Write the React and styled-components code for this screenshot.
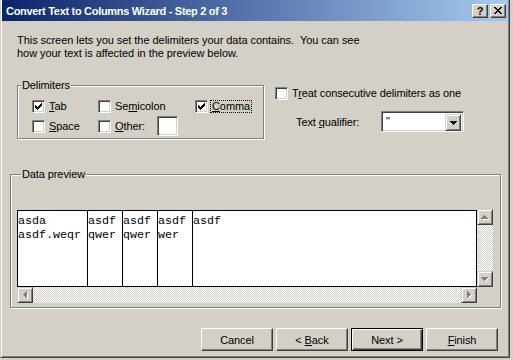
import React from 'react';
import styled, { createGlobalStyle } from 'styled-components';

const face = '#d4d0c8';
const shadow = '#808080';
const dark = '#404040';
const ui = '"Liberation Sans", Arial, sans-serif';
const mono = '"Liberation Mono", "Courier New", monospace';

const GlobalStyle = createGlobalStyle`
  html, body {
    margin: 0;
    padding: 0;
    background: ${face};
  }
  body {
    font-family: ${ui};
    font-size: 11px;
    letter-spacing: -0.1px;
    color: #000;
  }
  * {
    box-sizing: border-box;
  }
`;

const Window = styled.div`
  width: 510px;
  height: 358px;
  display: flex;
  flex-direction: column;
  background: ${face};
  border-left: 1px solid ${face};
  border-right: 1px solid ${dark};
  border-bottom: 1px solid ${dark};
  padding: 0 1px 1px 1px;
  box-shadow: inset 1px 0 #fff, inset -1px -1px ${shadow};
`;

const TitleBar = styled.div`
  height: 21px;
  flex-shrink: 0;
  display: flex;
  align-items: center;
  justify-content: space-between;
  padding: 0 2px 0 2px;
  background: linear-gradient(to right, #0a246a, #a6caf0);
`;

const TitleText = styled.span`
  color: #fff;
  font-weight: bold;
  font-size: 11px;
  padding-left: 2px;
  letter-spacing: -0.3px;
`;

const CaptionButtons = styled.div`
  display: flex;
  gap: 2px;
`;

const CaptionButton = styled.div`
  width: 16px;
  height: 14px;
  display: flex;
  align-items: center;
  justify-content: center;
  background: ${face};
  border: 1px solid;
  border-color: #fff ${dark} ${dark} #fff;
  box-shadow: inset -1px -1px ${shadow};
  font-weight: bold;
  font-size: 11px;
  line-height: 12px;
`;

const Body = styled.div`
  flex: 1;
  display: flex;
  flex-direction: column;
  padding: 0 0 0 8px;
`;

const Intro = styled.p`
  margin: 13px 0 0 7px;
  line-height: 13px;
  letter-spacing: -0.05px;
  white-space: pre;
`;

const OptionsRow = styled.div`
  display: flex;
  gap: 11px;
  margin-top: 19px;
  padding-left: 7px;
`;

const Group = styled.fieldset`
  margin: 0;
  padding: 0;
  min-width: 0;
  width: ${(p) => p.$width}px;
  border: 1px solid ${shadow};
  box-shadow: inset 1px 1px #fff, 1px 1px #fff;
`;

const Legend = styled.legend`
  margin-left: ${(p) => p.$offset}px;
  padding: 0 1px;
  line-height: 13px;
  background: ${face};
`;

const DelimGrid = styled.div`
  display: grid;
  grid-template-columns: 66px 97px auto;
  grid-auto-rows: 20px;
  align-items: center;
  padding: 4px 0 2px 14px;
`;

const CheckRow = styled.div`
  display: flex;
  align-items: center;
  gap: ${(p) => (p.$focus ? 2 : 4)}px;
  line-height: 13px;
`;

const Box = styled.span`
  width: 13px;
  height: 13px;
  flex-shrink: 0;
  display: flex;
  align-items: center;
  justify-content: center;
  background: #fff;
  border: 1px solid;
  border-color: ${shadow} #fff #fff ${shadow};
  box-shadow: inset 1px 1px ${dark}, inset -1px -1px ${face};
`;

const Label = styled.span`
  padding: 0 ${(p) => (p.$focus ? 1 : 0)}px;
  border: ${(p) => (p.$focus ? '1px dotted #000' : 'none')};
  line-height: ${(p) => (p.$focus ? 11 : 13)}px;
`;

const SmallField = styled.span`
  width: 21px;
  height: 20px;
  margin-left: 8px;
  background: #fff;
  border: 1px solid;
  border-color: ${shadow} #fff #fff ${shadow};
  box-shadow: inset 1px 1px ${dark}, inset -1px -1px ${face};
`;

const SideColumn = styled.div`
  display: flex;
  flex-direction: column;
  padding-top: 8px;
`;

const QualifierRow = styled.div`
  display: flex;
  align-items: center;
  margin-top: 11px;
  padding-left: 21px;
`;

const QualifierLabel = styled.span`
  width: 85px;
`;

const Combo = styled.div`
  width: 83px;
  height: 21px;
  display: flex;
  background: #fff;
  border: 1px solid;
  border-color: ${shadow} #fff #fff ${shadow};
  box-shadow: inset 1px 1px ${dark}, inset -1px -1px ${face};
  padding: 2px;
`;

const ComboValue = styled.span`
  flex: 1;
  padding-left: 2px;
  line-height: 15px;
`;

const DropButton = styled.span`
  width: 16px;
  height: 17px;
  display: flex;
  align-items: center;
  justify-content: center;
  background: ${face};
  border: 1px solid;
  border-color: ${face} ${dark} ${dark} ${face};
  box-shadow: inset 1px 1px #fff, inset -1px -1px ${shadow};
`;

const PreviewGroup = styled(Group)`
  margin-top: 29px;
  padding: 28px 7px 4px 6px;
`;

const PreviewFrame = styled.div`
  display: grid;
  grid-template-columns: 460px 16px;
  grid-template-rows: 78px 16px;
`;

const DataGrid = styled.div`
  display: flex;
  background: #fff;
  border: 1px solid #000;
  margin-top: 1px;
  overflow: hidden;
`;

const DataColumn = styled.div`
  flex: ${(p) => (p.$width ? `0 0 ${p.$width}px` : '1')};
  border-right: ${(p) => (p.$width ? '1px solid #000' : 'none')};
  font-family: ${mono};
  font-size: 11.67px;
  letter-spacing: 0;
  line-height: 14px;
  padding-top: 3px;
  white-space: pre;
`;

const Track = styled.div`
  display: flex;
  flex-direction: ${(p) => (p.$vertical ? 'column' : 'row')};
  justify-content: space-between;
  background: repeating-conic-gradient(#fff 0 25%, ${face} 0 50%) 0 0 / 2px 2px;
`;

const ScrollButton = styled.span`
  width: 16px;
  height: 16px;
  display: flex;
  align-items: center;
  justify-content: center;
  background: ${face};
  border: 1px solid;
  border-color: ${face} ${dark} ${dark} ${face};
  box-shadow: inset 1px 1px #fff, inset -1px -1px ${shadow};
`;

const Corner = styled.div`
  background: ${face};
`;

const ButtonRow = styled.div`
  display: flex;
  justify-content: flex-end;
  gap: 3px;
  margin-top: 20px;
  padding-right: 10px;
`;

const Button = styled.button`
  width: 72px;
  height: 23px;
  padding: 0;
  font-family: ${ui};
  font-size: 11px;
  color: #000;
  letter-spacing: -0.1px;
  background: ${face};
  border: 1px solid;
  border-color: ${(p) => (p.$default ? '#000' : `#fff ${dark} ${dark} #fff`)};
  box-shadow: ${(p) =>
    p.$default
      ? `inset 1px 1px #fff, inset -1px -1px ${dark}, inset -2px -2px ${shadow}`
      : `inset -1px -1px ${shadow}`};
`;

const Px = ({ w, h, d, fill = '#000' }) => (
  <svg width={w} height={h} viewBox={`0 0 ${w} ${h}`} shapeRendering='crispEdges'>
    <path d={d} fill={fill} />
  </svg>
);

const checkPath =
  'M6 0h1v1h-1zM5 1h2v1h-2zM0 2h1v1h-1zM4 2h3v1h-3zM0 3h2v1h-2zM3 3h3v1h-3zM0 4h5v1h-5zM1 5h3v1h-3zM2 6h1v1h-1z';
const closePath =
  'M0 0h2v1h-2zM6 0h2v1h-2zM1 1h2v1h-2zM5 1h2v1h-2zM2 2h4v1h-4zM3 3h2v1h-2zM2 4h4v1h-4zM1 5h2v1h-2zM5 5h2v1h-2zM0 6h2v1h-2zM6 6h2v1h-2z';
const downPath = 'M0 0h7v1h-7zM1 1h5v1h-5zM2 2h3v1h-3zM3 3h1v1h-1z';

const Arrow = ({ dir }) => {
  const shapes = {
    up: 'M3 0h1v1h-1zM2 1h3v1h-3zM1 2h5v1h-5zM0 3h7v1h-7z',
    down: downPath,
    left: 'M3 0h1v7h-1zM2 1h1v5h-1zM1 2h1v3h-1zM0 3h1v1h-1z',
    right: 'M0 0h1v7h-1zM1 1h1v5h-1zM2 2h1v3h-1zM3 3h1v1h-1z',
  };
  const horiz = dir === 'left' || dir === 'right';
  const w = horiz ? 5 : 8;
  const h = horiz ? 8 : 5;
  return (
    <svg width={w} height={h} viewBox={`0 0 ${w} ${h}`} shapeRendering='crispEdges'>
      <path d={shapes[dir]} fill='#fff' transform='translate(1 1)' />
      <path d={shapes[dir]} fill={shadow} />
    </svg>
  );
};

const Check = ({ checked, children, focus }) => (
  <CheckRow $focus={focus}>
    <Box>{checked && <Px w={7} h={7} d={checkPath} />}</Box>
    <Label $focus={focus}>{children}</Label>
  </CheckRow>
);

const columns = [
  { id: 1, width: 70, lines: ['asda', 'asdf.weqr'] },
  { id: 2, width: 35, lines: ['asdf', 'qwer'] },
  { id: 3, width: 35, lines: ['asdf', 'qwer'] },
  { id: 4, width: 35, lines: ['asdf', 'wer'] },
  { id: 5, lines: ['asdf'] },
];

const buttons = [
  { id: 'cancel', text: 'Cancel' },
  { id: 'back', text: <>&lt; <u>B</u>ack</> },
  { id: 'next', text: 'Next >', isDefault: true },
  { id: 'finish', text: <><u>F</u>inish</> },
];

export default function App() {
  return (
    <>
      <GlobalStyle />
      <Window>
        <TitleBar>
          <TitleText>Convert Text to Columns Wizard - Step 2 of 3</TitleText>
          <CaptionButtons>
            <CaptionButton>?</CaptionButton>
            <CaptionButton>
              <Px w={8} h={7} d={closePath} />
            </CaptionButton>
          </CaptionButtons>
        </TitleBar>
        <Body>
          <Intro>
            {'This screen lets you set the delimiters your data contains.  You can see\nhow your text is affected in the preview below.'}
          </Intro>
          <OptionsRow>
            <Group $width={247}>
              <Legend $offset={3}>Delimiters</Legend>
              <DelimGrid>
                <Check checked>
                  <u>T</u>ab
                </Check>
                <Check>
                  Se<u>m</u>icolon
                </Check>
                <Check checked focus>
                  <u>C</u>omma
                </Check>
                <Check>
                  <u>S</u>pace
                </Check>
                <CheckRow>
                  <Check>
                    <u>O</u>ther:
                  </Check>
                  <SmallField />
                </CheckRow>
              </DelimGrid>
            </Group>
            <SideColumn>
              <Check>
                T<u>r</u>eat consecutive delimiters as one
              </Check>
              <QualifierRow>
                <QualifierLabel>
                  Text <u>q</u>ualifier:
                </QualifierLabel>
                <Combo>
                  <ComboValue>"</ComboValue>
                  <DropButton>
                    <Px w={7} h={4} d={downPath} />
                  </DropButton>
                </Combo>
              </QualifierRow>
            </SideColumn>
          </OptionsRow>
          <PreviewGroup $width={491}>
            <Legend $offset={4}>Data preview</Legend>
            <PreviewFrame>
              <DataGrid>
                {columns.map((col) => (
                  <DataColumn key={col.id} $width={col.width}>
                    {col.lines.join('\n')}
                  </DataColumn>
                ))}
              </DataGrid>
              <Track $vertical>
                <ScrollButton>
                  <Arrow dir='up' />
                </ScrollButton>
                <ScrollButton>
                  <Arrow dir='down' />
                </ScrollButton>
              </Track>
              <Track>
                <ScrollButton>
                  <Arrow dir='left' />
                </ScrollButton>
                <ScrollButton>
                  <Arrow dir='right' />
                </ScrollButton>
              </Track>
              <Corner />
            </PreviewFrame>
          </PreviewGroup>
          <ButtonRow>
            {buttons.map((b) => (
              <Button key={b.id} $default={b.isDefault}>
                {b.text}
              </Button>
            ))}
          </ButtonRow>
        </Body>
      </Window>
    </>
  );
}
